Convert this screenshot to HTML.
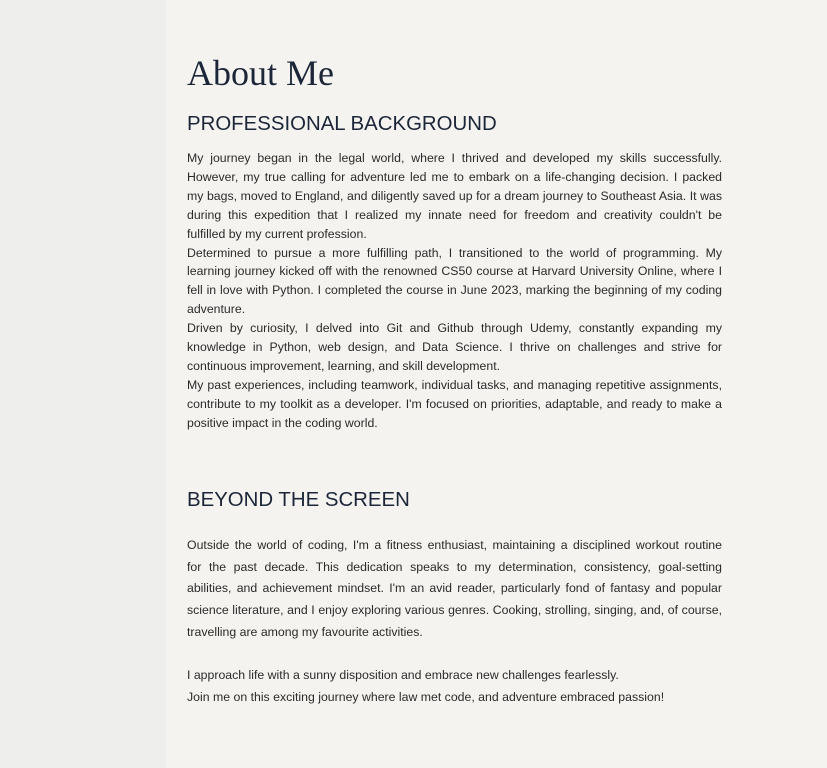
<!DOCTYPE html>
<html><head><meta charset="utf-8"><style>
html,body{margin:0;padding:0;width:827px;height:768px;overflow:hidden;background:#f4f3f0;}
.side{position:absolute;left:0;top:0;width:166px;height:768px;background:#eeeeed;}
.main{position:absolute;left:187px;top:0;width:535px;font-family:"Liberation Sans",sans-serif;color:#222;}
h1{position:absolute;top:52px;left:0;margin:0;font-family:"Liberation Serif",serif;font-weight:normal;font-size:36px;color:#1d2638;white-space:nowrap;}
h2{position:absolute;left:0;margin:0;font-weight:normal;font-size:20.4px;color:#1d2638;white-space:nowrap;}
.b{font-size:12.3px;color:#2a2a2a;}
.b div{white-space:nowrap;text-align:justify;text-align-last:justify;}
.b div.l{text-align-last:left;}
.p1{position:absolute;top:149px;left:0;width:535px;line-height:18.9px;}
.p2{position:absolute;top:535px;left:0;width:535px;line-height:21.7px;}
</style></head><body>
<div class="side"></div>
<div class="main">
<h1>About Me</h1>
<h2 style="top:113px">PROFESSIONAL BACKGROUND</h2>
<div class="b p1">
<div>My journey began in the legal world, where I thrived and developed my skills successfully.</div>
<div>However, my true calling for adventure led me to embark on a life-changing decision. I packed</div>
<div>my bags, moved to England, and diligently saved up for a dream journey to Southeast Asia. It was</div>
<div>during this expedition that I realized my innate need for freedom and creativity couldn't be</div>
<div class="l">fulfilled by my current profession.</div>
<div>Determined to pursue a more fulfilling path, I transitioned to the world of programming. My</div>
<div>learning journey kicked off with the renowned CS50 course at Harvard University Online, where I</div>
<div>fell in love with Python. I completed the course in June 2023, marking the beginning of my coding</div>
<div class="l">adventure.</div>
<div>Driven by curiosity, I delved into Git and Github through Udemy, constantly expanding my</div>
<div>knowledge in Python, web design, and Data Science. I thrive on challenges and strive for</div>
<div class="l">continuous improvement, learning, and skill development.</div>
<div>My past experiences, including teamwork, individual tasks, and managing repetitive assignments,</div>
<div>contribute to my toolkit as a developer. I'm focused on priorities, adaptable, and ready to make a</div>
<div class="l">positive impact in the coding world.</div>
</div>
<h2 style="top:489px">BEYOND THE SCREEN</h2>
<div class="b p2">
<div>Outside the world of coding, I'm a fitness enthusiast, maintaining a disciplined workout routine</div>
<div>for the past decade. This dedication speaks to my determination, consistency, goal-setting</div>
<div>abilities, and achievement mindset. I'm an avid reader, particularly fond of fantasy and popular</div>
<div>science literature, and I enjoy exploring various genres. Cooking, strolling, singing, and, of course,</div>
<div class="l">travelling are among my favourite activities.</div>
<div class="l">&nbsp;</div>
<div class="l">I approach life with a sunny disposition and embrace new challenges fearlessly.</div>
<div class="l">Join me on this exciting journey where law met code, and adventure embraced passion!</div>
</div>
</div>
</body></html>
